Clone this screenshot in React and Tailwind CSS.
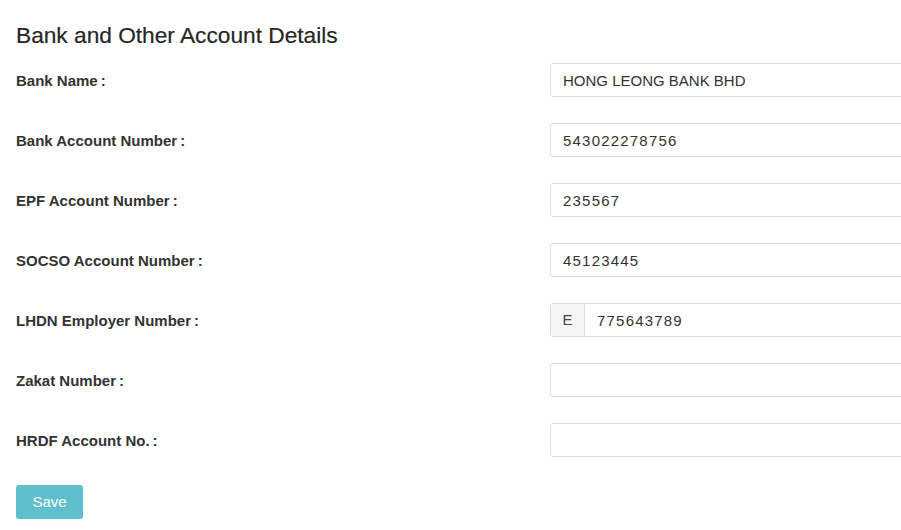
const rows = [
  { label: 'Bank Name', value: 'HONG LEONG BANK BHD' },
  { label: 'Bank Account Number', value: '543022278756' },
  { label: 'EPF Account Number', value: '235567' },
  { label: 'SOCSO Account Number', value: '45123445' },
  { label: 'LHDN Employer Number', value: '775643789', addon: 'E' },
  { label: 'Zakat Number', value: '' },
  { label: 'HRDF Account No.', value: '' },
]

export default function App() {
  return (
    <div
      className="min-h-screen w-full overflow-hidden bg-white px-4 text-[#333]"
      style={{ fontFamily: '"Liberation Sans", Arial, sans-serif' }}
    >
      <h2 className="pt-[21px] text-[22.7px] leading-[28px] text-[#262626] [-webkit-text-stroke:0.2px_#262626]">
        Bank and Other Account Details
      </h2>

      <div className="mt-[14px] flex flex-col gap-[26px]">
        {rows.map((row) => (
          <div key={row.label} className="flex items-center">
            <label className="w-[534px] shrink-0 pt-[2px] text-[15px] font-bold text-[#333]">
              {row.label}
              <span className="ml-[3px]">:</span>
            </label>
            <div className="flex h-[34px] w-[400px] shrink-0 rounded-[3px] border border-[#dcdcdc] bg-white">
              {row.addon && (
                <span className="flex w-[34px] items-center justify-center border-r border-[#dcdcdc] bg-[#f5f5f5] text-[15px] text-[#444]">
                  {row.addon}
                </span>
              )}
              <input
                readOnly
                value={row.value}
                className={
                  'h-full flex-1 bg-transparent px-[12px] text-[15px] text-[#333] outline-none ' +
                  (/^\d+$/.test(row.value) ? 'tracking-[1.2px]' : '')
                }
                style={{ fontFamily: '"Liberation Sans", Arial, sans-serif' }}
              />
            </div>
          </div>
        ))}
      </div>

      <button className="mt-[28px] h-[34px] w-[67px] rounded-[3px] bg-[#5fbfcc] text-[15px] text-white">
        Save
      </button>
    </div>
  )
}
